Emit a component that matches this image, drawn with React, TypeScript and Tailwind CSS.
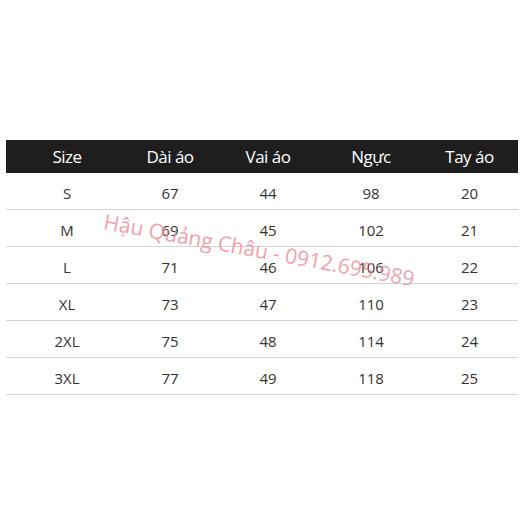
import React from 'react';

const HEADERS = ['Size', 'Dài áo', 'Vai áo', 'Ngực', 'Tay áo'];

const ROWS: (string | number)[][] = [
  ['S', 67, 44, 98, 20],
  ['M', 69, 45, 102, 21],
  ['L', 71, 46, 106, 22],
  ['XL', 73, 47, 110, 23],
  ['2XL', 75, 48, 114, 24],
  ['3XL', 77, 49, 118, 25],
];

const GRID = 'grid grid-cols-[122px_84px_112px_94px_103px]';

export default function App() {
  return (
    <div
      className="relative w-[524px] h-[524px] bg-white pt-[140px] px-[6px] overflow-hidden"
      style={{ fontFamily: '"Open Sans", "Noto Sans", sans-serif' }}
    >
      {/* Header */}
      <div className={`${GRID} h-[33px] items-center bg-[#1e1e1e] text-white text-[17px] tracking-[-0.5px]`}>
        {HEADERS.map((h) => (
          <div key={h} className="text-center">
            {h}
          </div>
        ))}
      </div>

      {/* Rows */}
      {ROWS.map((row) => (
        <div
          key={row[0]}
          className={`${GRID} h-[37px] items-center pt-[5px] border-b border-[#d4d4d4] text-[15px] text-[#333333]`}
        >
          {row.map((cell, i) => (
            <div key={i} className="text-center">
              {cell}
            </div>
          ))}
        </div>
      ))}

      {/* Watermark */}
      <div className="absolute left-[104px] top-[206px] origin-left rotate-[10.5deg] whitespace-nowrap text-[21px] text-[#f08a96] opacity-80 pointer-events-none">
        Hậu Quảng Châu - 0912.695.989
      </div>
    </div>
  );
}
